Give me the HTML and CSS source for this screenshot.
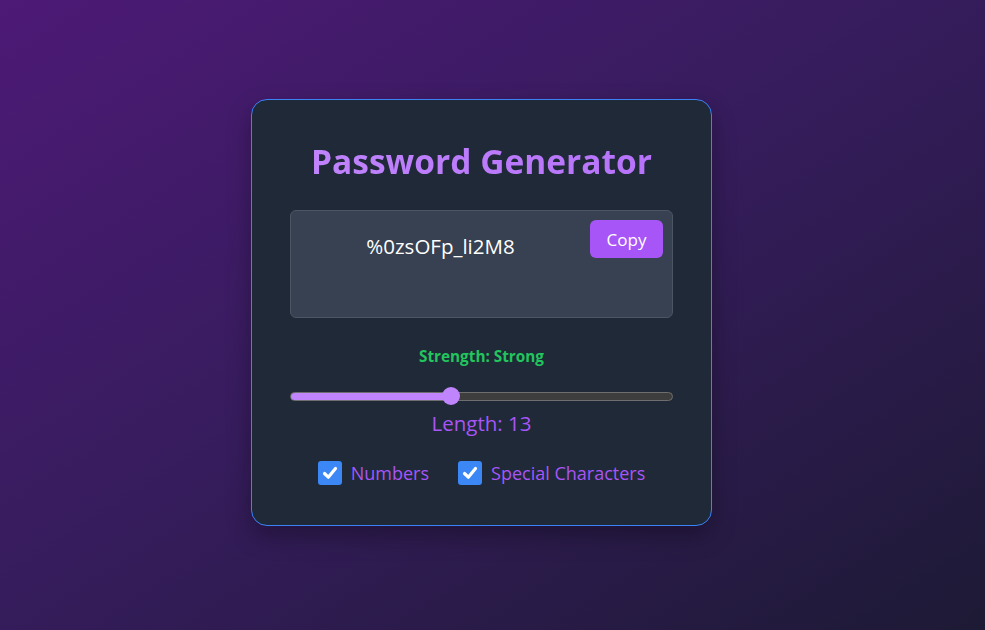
FILE: index.html
```html
<!DOCTYPE html>
<html lang="en">
<head>
<meta charset="utf-8">
<title>Password Generator</title>
<link rel="stylesheet" href="styles.css">
</head>
<body>
<div class="page">
  <div class="card">
    <h1 class="title">Password Generator</h1>
    <div class="output">
      <div class="pw">%0zsOFp_li2M8</div>
      <button class="copy">Copy</button>
    </div>
    <div class="strength">Strength: Strong</div>
    <div class="slider">
      <div class="track"><div class="fill" style="width:161px"></div></div>
      <div class="thumb" style="left:152px"></div>
    </div>
    <div class="length">Length: 13</div>
    <div class="options">
      <label class="opt"><span class="box"><svg width="18" height="18" viewBox="0 0 18 18"><path d="M3.5 9.5 L7.3 13.2 L14.5 4.5" fill="none" stroke="#fff" stroke-width="3.2" stroke-linecap="round" stroke-linejoin="round"/></svg></span>Numbers</label>
      <label class="opt"><span class="box"><svg width="18" height="18" viewBox="0 0 18 18"><path d="M3.5 9.5 L7.3 13.2 L14.5 4.5" fill="none" stroke="#fff" stroke-width="3.2" stroke-linecap="round" stroke-linejoin="round"/></svg></span>Special Characters</label>
    </div>
  </div>
</div>
</body>
</html>
```
FILE: styles.css
```css
* { box-sizing: border-box; }
html, body { margin: 0; padding: 0; }
body {
  font-family: "Open Sans", "Noto Sans", sans-serif;
  background: linear-gradient(to bottom right, #4d1a76 0%, #371c5e 45%, #1d1a35 100%);
  min-height: 630px;
}
.page {
  min-height: 630px;
  padding: 99px 0 0 251px;
}
.card {
  width: 461px;
  height: 427px;
  background: #1f2937;
  border: 1px solid #3b82f6;
  border-radius: 16px;
  padding: 38px 38px 0 38px;
  box-shadow: 0 10px 25px rgba(0,0,0,0.3);
  display: flex;
  flex-direction: column;
  align-items: stretch;
}
.title {
  margin: 0;
  height: 45px;
  text-align: center;
  font-size: 33.5px;
  font-weight: 700;
  line-height: 45px;
  background: linear-gradient(to right, #c084fc, #b672fa);
  -webkit-background-clip: text;
  background-clip: text;
  color: transparent;
  margin-top: 1px;
}
.output {
  margin-top: 26px;
  height: 108px;
  background: #374151;
  border: 1px solid #4b5563;
  border-radius: 6px;
  padding: 9px 9px 0 0;
  display: flex;
  align-items: flex-start;
}
.pw {
  flex: 1;
  text-align: center;
  color: #ffffff;
  font-size: 20.5px;
  line-height: 27px;
  padding-top: 13px;
}
.copy {
  width: 73px;
  height: 38px;
  background: #a855f7;
  color: #fff;
  border: none;
  border-radius: 6px;
  font-family: inherit;
  font-size: 17px;
  padding: 0;
}
.strength {
  margin-top: 26px;
  text-align: center;
  color: #22c55e;
  font-weight: 700;
  font-size: 15.3px;
  line-height: 24px;
}
.slider {
  position: relative;
  margin-top: 18px;
  height: 20px;
}
.track {
  position: absolute;
  left: 0; right: 0; top: 6px;
  height: 9px;
  background: #3d3d3d;
  border: 1px solid #6e6e6e;
  border-radius: 5px;
  overflow: hidden;
}
.fill {
  height: 100%;
  background: #c084fc;
}
.thumb {
  position: absolute;
  top: 1px;
  width: 18px;
  height: 18px;
  border-radius: 50%;
  background: #c084fc;
}
.length {
  margin-top: 3px;
  text-align: center;
  color: #a855f7;
  font-size: 20.5px;
  line-height: 28px;
}
.options {
  margin-top: 23px;
  display: flex;
  justify-content: center;
  gap: 29px;
}
.opt {
  display: flex;
  align-items: center;
  gap: 9px;
  color: #a855f7;
  font-size: 18px;
  line-height: 26px;
}
.box {
  width: 24px;
  height: 24px;
  border-radius: 3px;
  background: #3b87f6;
  display: flex;
  align-items: center;
  justify-content: center;
}
```
